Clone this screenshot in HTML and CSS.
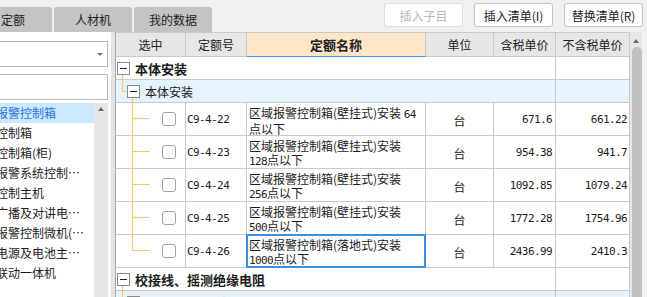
FILE: index.html
```html
<!DOCTYPE html>
<html lang="zh-CN">
<head>
<meta charset="utf-8">
<title>定额</title>
<link rel="stylesheet" href="styles.css">
</head>
<body>
<div class="app">
  <header class="topbar">
    <nav class="tabs">
      <div class="tab tab-first">定额</div>
      <div class="tab">人材机</div>
      <div class="tab">我的数据</div>
    </nav>
    <div class="actions">
      <button class="btn" disabled>插入子目</button>
      <button class="btn">插入清单(I)</button>
      <button class="btn">替换清单(R)</button>
    </div>
  </header>
  <main class="main">
    <aside class="left">
      <div class="select"><span class="caret"></span></div>
      <div class="search"></div>
      <div class="listwrap">
        <ul class="list">
          <li class="sel">报警控制箱</li>
          <li>控制箱</li>
          <li>控制箱(柜)</li>
          <li>报警系统控制…</li>
          <li>控制主机</li>
          <li>广播及对讲电…</li>
          <li>报警控制微机(…</li>
          <li>电源及电池主…</li>
          <li>联动一体机</li>
        </ul>
        <div class="vscroll"><span class="arrow-up"></span></div>
      </div>
    </aside>
    <div class="splitter"></div>
    <section class="grid">
      <div class="table">
        <div class="c h">选中</div>
        <div class="c h">定额号</div>
        <div class="c h hname">定额名称</div>
        <div class="c h">单位</div>
        <div class="c h">含税单价</div>
        <div class="c h">不含税单价</div>

        <div class="c grp down"><span class="minus"></span>本体安装</div>
        <div class="c"></div>

        <div class="c sub"><span class="minus"></span>本体安装</div>
        <div class="c subx"></div>

        <div class="c tree"><span class="chk"></span></div>
        <div class="c mono code">C9-4-22</div>
        <div class="c name">区域报警控制箱(壁挂式)安装 <span class="mono">64</span><br>点以下</div>
        <div class="c unit">台</div>
        <div class="c mono price">671.6</div>
        <div class="c mono price2">661.22</div>

        <div class="c tree"><span class="chk"></span></div>
        <div class="c mono code">C9-4-23</div>
        <div class="c name">区域报警控制箱(壁挂式)安装<br><span class="mono">128</span>点以下</div>
        <div class="c unit">台</div>
        <div class="c mono price">954.38</div>
        <div class="c mono price2">941.7</div>

        <div class="c tree"><span class="chk"></span></div>
        <div class="c mono code">C9-4-24</div>
        <div class="c name">区域报警控制箱(壁挂式)安装<br><span class="mono">256</span>点以下</div>
        <div class="c unit">台</div>
        <div class="c mono price">1092.85</div>
        <div class="c mono price2">1079.24</div>

        <div class="c tree"><span class="chk"></span></div>
        <div class="c mono code">C9-4-25</div>
        <div class="c name">区域报警控制箱(壁挂式)安装<br><span class="mono">500</span>点以下</div>
        <div class="c unit">台</div>
        <div class="c mono price">1772.28</div>
        <div class="c mono price2">1754.96</div>

        <div class="c tree last"><span class="chk"></span></div>
        <div class="c mono code">C9-4-26</div>
        <div class="c name cur">区域报警控制箱(落地式)安装<br><span class="mono">1000</span>点以下</div>
        <div class="c unit">台</div>
        <div class="c mono price">2436.99</div>
        <div class="c mono price2">2410.3</div>

        <div class="c grp down"><span class="minus"></span>校接线、摇测绝缘电阻</div>
        <div class="c"></div>

        <div class="c sub"><span class="minus"></span>校接线、摇测绝缘电阻</div>
        <div class="c subx"></div>
      </div>
      <div class="tscroll"><span class="arrow-up dark"></span><span class="thumb"></span></div>
      <div class="tpad"></div>
    </section>
  </main>
</div>
</body>
</html>
```

FILE: styles.css
```css
* { box-sizing: border-box; margin: 0; padding: 0; }
html, body { width: 647px; height: 297px; overflow: hidden; }
body {
  font-family: "Noto Sans CJK SC", "Noto Sans", sans-serif;
  font-size: 12px;
  color: #1c1c1c;
  background: #f0f0f0;
}
.app { display: flex; flex-direction: column; height: 297px; }

/* top bar */
.topbar { height: 32px; flex: none; display: flex; justify-content: space-between; background: #f0f0f0; }
.tabs { display: flex; align-items: flex-end; gap: 2px; margin-left: -26px; }
.tab {
  width: 78px; height: 25px; background: #c3c3c3; border-radius: 3px 3px 0 0;
  display: flex; align-items: center; justify-content: center; color: #222; font-size: 12px;
}
.actions { display: flex; gap: 11px; padding: 3px 4px 0 0; }
.btn {
  width: 79px; height: 24px; background: #fff; border: 1px solid #c2c2c2; border-radius: 3px;
  font: inherit; font-size: 12px; color: #222;
  display: flex; align-items: center; justify-content: center;
}
.btn:disabled { color: #b8b8b8; border-color: #dedede; }

/* main */
.main { flex: 1; min-height: 0; display: flex; }
.left { width: 111px; flex: none; background: #fff; padding-top: 9px; display: flex; flex-direction: column; }
.select, .search { margin-left: -3px; width: 111px; height: 26px; border: 1px solid #b9b9b9; background: #fff; flex: none; }
.select { display: flex; justify-content: flex-end; align-items: center; padding-right: 4px; }
.caret { width: 0; height: 0; border-left: 3px solid transparent; border-right: 3px solid transparent; border-top: 3px solid #777; }
.search { margin-top: 7px; }
.listwrap { margin-top: 3px; margin-right: 3px; flex: 1; display: flex; min-height: 0; }
.list { list-style: none; flex: 1; overflow: hidden; }
.list li { height: 20px; line-height: 20px; white-space: nowrap; text-indent: -4px; font-size: 12px; color: #1c1c1c; }
.list li.sel { background: #cce8ff; color: #2d74d6; }
.vscroll { width: 14px; background: #e6e6e6; display: flex; justify-content: center; padding-top: 4px; }
.arrow-up { width: 0; height: 0; border-left: 3.5px solid transparent; border-right: 3.5px solid transparent; border-bottom: 4px solid #6a6a6a; }

.splitter { width: 4px; flex: none; background: #e4e4e4; }
.grid { flex: 1; display: flex; border-left: 1px solid #a6a6a6; background: #fff; overflow: hidden; }

/* table */
.table {
  width: 514px; flex: none; display: grid; align-content: start;
  grid-template-columns: 70px 61px 179px 68px 62px 74px;
  grid-template-rows: 24px 23px 23px repeat(5, 33px) 23px 23px;
  border-top: 1px solid #c9c9c9;
}
.c {
  border-right: 1px solid #c9c9c9; border-bottom: 1px solid #c9c9c9;
  display: flex; align-items: center; white-space: nowrap; position: relative; min-width: 0;
}
.h { background: #e6e6e6; justify-content: center; color: #222; font-size: 12px; }
.hname { background: #fde6c8; border-bottom-color: #3c96ee; font-weight: bold; font-size: 13px; }

.grp { grid-column: 1 / 6; padding-left: 1px; font-weight: bold; font-size: 13px; color: #1a1a1a; }
.sub { grid-column: 1 / 6; padding-left: 11px; background: #e5f3fd; font-size: 12px; }
.subx { background: #e5f3fd; }
.minus {
  width: 13px; height: 13px; border: 1px solid #8a8a8a; background: #fff;
  position: relative; z-index: 2; flex: none; margin-right: 5px;
}
.minus::before { content: ""; position: absolute; left: 2px; right: 2px; top: 5px; height: 1px; background: #222; }

/* tree lines */
.grp.down::after { content: ""; position: absolute; left: 6px; top: 50%; bottom: -1px; width: 1px; background: #ffc672; z-index: 1; }
.sub::before {
  content: ""; position: absolute; left: 6px; top: 0; width: 6px; height: 11px;
  border-left: 1px solid #ffc672; border-bottom: 1px solid #ffc672; z-index: 1;
}
.sub::after { content: ""; position: absolute; left: 16px; top: 50%; bottom: -1px; width: 1px; background: #ffc672; z-index: 1; }
.tree { padding-left: 46px; }
.tree::before { content: ""; position: absolute; left: 16px; top: 0; bottom: -1px; width: 1px; background: #ffc672; z-index: 1; }
.tree.last::before { bottom: auto; height: 16px; }
.tree::after { content: ""; position: absolute; left: 16px; top: 15px; width: 18px; height: 1px; background: #ffc672; z-index: 1; }
.chk { width: 14px; height: 14px; border: 1px solid #a3a3a3; border-radius: 3px; background: #fff; }

.mono { font-family: "DejaVu Sans Mono", "Liberation Mono", monospace; font-size: 11px; letter-spacing: -0.6px; }
.code { padding-left: 1px; }
.name { padding: 3px 0 0 2px; line-height: 14px; font-size: 12px; display: block; }
.unit { justify-content: center; font-size: 12px; padding-top: 2px; }
.price { justify-content: flex-end; padding-right: 3px; }
.price2 { justify-content: flex-end; padding-right: 2px; }
.cur::after {
  content: ""; position: absolute; left: -1px; top: -1px; right: -1px; bottom: -1px;
  border: 2px solid #3a8ee8;
}

/* table scrollbar */
.tscroll { width: 12px; flex: none; background: #e6e6e6; display: flex; flex-direction: column; align-items: center; padding-top: 7px; }
.thumb { margin-top: 4px; margin-left: 2px; width: 10px; height: 260px; border-radius: 5px; background: #c1c1c1; flex: none; }
.tpad { flex: 1; background: #f0f0f0; }
```
